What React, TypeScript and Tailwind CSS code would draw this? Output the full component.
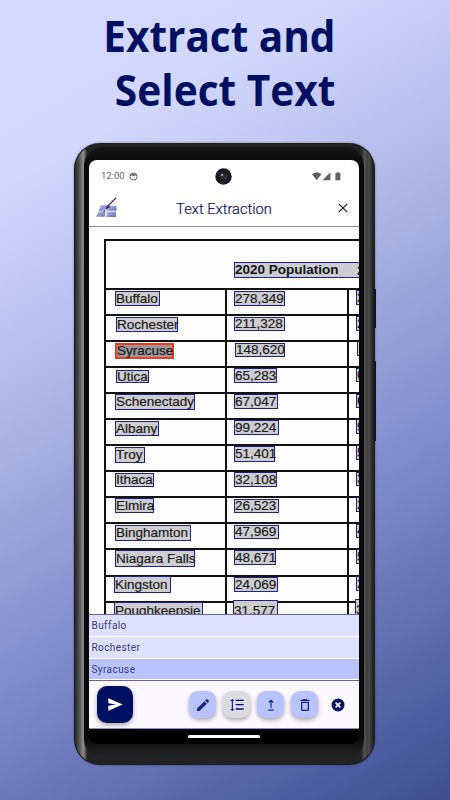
import clsx from "clsx";
import type { ReactNode } from "react";

type Box = { text: string; x: number; y: number; w: number; h: number };
type Row = { height: number; name: Box; value: Box; next: Box; selected?: boolean };

// box offsets are relative to the cell they sit in
const rows: Row[] = [
  { height: 26, name: { text: "Buffalo", x: 9, y: 1, w: 45, h: 15 }, value: { text: "278,349", x: 7, y: 1, w: 51, h: 15 }, next: { text: "2", x: 7, y: 0, w: 50, h: 15 } },
  { height: 26, name: { text: "Rochester", x: 10, y: 1, w: 62, h: 15 }, value: { text: "211,328", x: 7, y: 1, w: 51, h: 14 }, next: { text: "2", x: 7, y: 0, w: 50, h: 15 } },
  { height: 26, selected: true, name: { text: "Syracuse", x: 9, y: 1, w: 59, h: 16 }, value: { text: "148,620", x: 8, y: 1, w: 50, h: 14 }, next: { text: "1", x: 8, y: -1, w: 50, h: 15 } },
  { height: 26, name: { text: "Utica", x: 10, y: 2, w: 33, h: 13 }, value: { text: "65,283", x: 7, y: 0, w: 43, h: 15 }, next: { text: "6", x: 7, y: 0, w: 50, h: 14 } },
  { height: 26, name: { text: "Schenectady", x: 9, y: 0, w: 80, h: 16 }, value: { text: "67,047", x: 7, y: 0, w: 44, h: 15 }, next: { text: "6", x: 7, y: 0, w: 50, h: 14 } },
  { height: 26, name: { text: "Albany", x: 9, y: 1, w: 44, h: 15 }, value: { text: "99,224", x: 7, y: 0, w: 45, h: 15 }, next: { text: "9", x: 7, y: -1, w: 50, h: 15 } },
  { height: 26, name: { text: "Troy", x: 9, y: 1, w: 30, h: 16 }, value: { text: "51,401", x: 7, y: 0, w: 41, h: 16 }, next: { text: "5", x: 7, y: -1, w: 50, h: 15 } },
  { height: 26, name: { text: "Ithaca", x: 9, y: 1, w: 39, h: 14 }, value: { text: "32,108", x: 7, y: 0, w: 43, h: 15 }, next: { text: "3", x: 7, y: 0, w: 50, h: 14 } },
  { height: 26, name: { text: "Elmira", x: 9, y: 0, w: 39, h: 15 }, value: { text: "26,523", x: 7, y: 1, w: 45, h: 14 }, next: { text: "2", x: 7, y: -1, w: 50, h: 15 } },
  { height: 26, name: { text: "Binghamton", x: 9, y: 1, w: 76, h: 16 }, value: { text: "47,969", x: 7, y: 1, w: 45, h: 14 }, next: { text: "4", x: 7, y: 0, w: 50, h: 14 } },
  { height: 27, name: { text: "Niagara Falls", x: 9, y: 0, w: 80, h: 17 }, value: { text: "48,671", x: 7, y: 0, w: 42, h: 15 }, next: { text: "5", x: 7, y: -1, w: 50, h: 15 } },
  { height: 26, name: { text: "Kingston", x: 8, y: -1, w: 57, h: 17 }, value: { text: "24,069", x: 7, y: 0, w: 44, h: 15 }, next: { text: "2", x: 7, y: -1, w: 50, h: 15 } },
  { height: 26, name: { text: "Poughkeepsie", x: 8, y: -1, w: 89, h: 17 }, value: { text: "31,577", x: 6, y: -3, w: 45, h: 21 }, next: { text: "3", x: 6, y: -4, w: 50, h: 21 } },
];

const extracted = ["Buffalo", "Rochester", "Syracuse"];

const TextBox = ({ box, selected, bold }: { box: Box; selected?: boolean; bold?: boolean }) => (
  <div
    className={clsx(
      "flex shrink-0 items-center whitespace-nowrap border text-[13.5px] leading-none",
      selected ? "border-2 border-[#f5391d] bg-[#989898]" : "border-[#1c2484] bg-[#cdcdd0]",
      bold ? "font-bold text-[#151515]" : "text-[#1c1c1c] [-webkit-text-stroke:0.2px_#1c1c1c]",
    )}
    style={{ marginLeft: box.x, marginTop: box.y, width: box.w, height: box.h }}
  >
    {box.text}
  </div>
);

const ToolButton = ({ muted, children }: { muted?: boolean; children: ReactNode }) => (
  <button
    type="button"
    className={clsx(
      "flex h-[27px] w-[27px] items-center justify-center rounded-[9px] text-[#1c2a78] shadow-[0_2px_4px_rgba(0,0,0,0.33)]",
      muted ? "bg-[#dcdbe2]" : "bg-[#b9c3ff]",
    )}
  >
    {children}
  </button>
);

const StatusBar = () => (
  <div className="relative flex h-[32px] items-center justify-between pl-[12px] pr-[17px] text-[#666]">
    <div className="flex items-center gap-[4px]">
      <span className="text-[9.5px] leading-none">12:00</span>
      <svg width="9" height="9" viewBox="0 0 9 9" fill="none" stroke="currentColor">
        <circle cx="4.5" cy="4.5" r="3.6" strokeWidth="1" />
        <path d="M1.2 3.4 3 2h3l1.8 1.4L6 3.2l-1.5.7L3 3.2Z" fill="currentColor" strokeWidth=".4" />
        <path d="M3.2 5h.4M5.4 5h.4" strokeWidth=".8" />
      </svg>
    </div>
    <svg className="absolute left-[126px] top-[8px]" width="17" height="17" viewBox="0 0 17 17">
      <circle cx="8.5" cy="8.5" r="8.2" fill="#171819" />
      <circle cx="8.5" cy="8.5" r="4.5" fill="#22262d" />
      <circle cx="7" cy="7" r="1.3" fill="#8c93ab" />
      <circle cx="10.6" cy="9.8" r="1" fill="#31547d" />
    </svg>
    <svg width="30" height="9" viewBox="0 0 30 9" fill="#606060">
      <path d="M0 2.2C2.6-.1 6.8-.1 9.4 2.2L4.7 8.2Z" />
      <path d="M18.4.3v7.9h-7.9Z" />
      <path d="M23.4 1h1.4V.2h2.2V1h1.4v7.2h-5Z" />
    </svg>
  </div>
);

const Logo = () => (
  <svg width="22" height="21" viewBox="0 0 22 21">
    <defs>
      <linearGradient id="tile" x1="0" y1="0" x2="1" y2="1">
        <stop offset="0" stopColor="#b6beec" />
        <stop offset="1" stopColor="#6370b4" />
      </linearGradient>
    </defs>
    <path d="M4.8 8.3h7.2L10.3 14H2.6Z" fill="url(#tile)" />
    <path d="M12.6 8.8h7.9v5H11Z" fill="url(#tile)" />
    <path d="M2.3 14.5h7.2L8.8 19.8H0Z" fill="url(#tile)" />
    <path d="M11 14.4h9v5.6H10Z" fill="url(#tile)" />
    <path d="m20 .9-9.5 9.5" stroke="#15194c" strokeWidth="1.3" />
    <path d="m12.2 7.8 2.2 2.1-3.2 2.6L8.6 15l-1.7-.8 2.7-2.7Z" fill="#323a78" />
    <path d="m9 11.5-2 2 3.2-1.1-1 1.8 3.5-2.8" fill="none" stroke="#eef0ff" strokeWidth=".7" />
  </svg>
);

const Scan = () => (
  <div className="h-[387px] overflow-hidden bg-[#fdfdfd] pl-[15px] pt-[12px] font-['Liberation_Sans',Arial,sans-serif]">
    <div className="w-[300px] border-l-2 border-t-2 border-[#111]">
      <div className="flex h-[49px] border-b-2 border-[#111]">
        <div className="pl-[128px] pt-[21px]">
          <TextBox bold box={{ text: "2020 Population", x: 0, y: 0, w: 150, h: 16 }} />
        </div>
        <span className="-ml-[27px] mt-[23px] text-[13.5px] font-bold leading-none text-[#151515]">2</span>
      </div>
      {rows.map((row) => (
        <div
          key={row.name.text}
          className="grid grid-cols-[119px_122px_1fr] border-b-2 border-[#111]"
          style={{ height: row.height }}
        >
          <div className="flex h-0 items-start">
            <TextBox box={row.name} selected={row.selected} />
          </div>
          <div className="flex h-full items-start border-l-2 border-[#111]">
            <TextBox box={row.value} />
          </div>
          <div className="flex h-full items-start border-l-2 border-[#111]">
            <TextBox box={row.next} />
          </div>
        </div>
      ))}
    </div>
  </div>
);

const Toolbar = () => (
  <div className="flex h-[48px] items-center border-b border-[#8e93bd] bg-[#fbf8ff] pl-[8px]">
    <button
      type="button"
      className="flex h-[37px] w-[36px] items-center justify-center rounded-[10px] bg-[#001060] shadow-[0_2px_4px_rgba(0,0,0,0.35)]"
    >
      <svg width="15" height="13" viewBox="0 0 15 13" fill="white">
        <path d="M.3.3 14.7 6.5.3 12.7V7.8L8 6.5.3 5.2Z" />
      </svg>
    </button>
    <div className="ml-[56px] flex gap-[7px]">
      <ToolButton>
        <svg width="16" height="16" viewBox="0 0 24 24" fill="currentColor">
          <path d="M3 17.25V21h3.75L17.81 9.94l-3.75-3.75L3 17.25zM20.71 7.04a1 1 0 0 0 0-1.41l-2.34-2.34a1 1 0 0 0-1.41 0l-1.83 1.83 3.75 3.75 1.83-1.83z" />
        </svg>
      </ToolButton>
      <ToolButton muted>
        <svg width="16" height="16" viewBox="0 0 24 24" fill="#001080">
          <path d="M5.8 6H8L5 3 2 6h2.2v12H2l3 3 3-3H5.8V6zM10 4v2h12V4H10zm0 15h12v-2H10v2zm0-6.5h12v-2H10v2z" />
        </svg>
      </ToolButton>
      <ToolButton>
        <svg width="16" height="16" viewBox="0 0 16 16" fill="none" stroke="currentColor" strokeWidth="1.2">
          <path d="M8 11V3.4M5.8 5.5 8 3.3l2.2 2.2M5.3 13.2h5.4" />
        </svg>
      </ToolButton>
      <ToolButton>
        <svg width="16" height="16" viewBox="0 0 24 24" fill="currentColor">
          <path d="M6 19c0 1.1.9 2 2 2h8c1.1 0 2-.9 2-2V7H6v12zM8 9h8v10H8V9zm7.5-5-1-1h-5l-1 1H5v2h14V4h-3.5z" />
        </svg>
      </ToolButton>
    </div>
    <svg className="ml-[13px]" width="14" height="14" viewBox="0 0 14 14">
      <circle cx="7" cy="7" r="6.5" fill="#001060" />
      <path d="m4.6 4.6 4.8 4.8M9.4 4.6 4.6 9.4" stroke="white" strokeWidth="1.6" />
    </svg>
  </div>
);

const Phone = () => (
  <div className="relative h-[622px] w-[301px] rounded-[26px] bg-[#202020] p-px shadow-[0_0_2px_rgba(0,0,0,0.5)]">
    <div className="absolute -right-px top-[146px] h-[39px] w-[2px] bg-[#151515]" />
    <div className="absolute -right-px top-[218px] h-[80px] w-[2px] bg-[#151515]" />
    <div className="h-full rounded-[25px] bg-[linear-gradient(90deg,#252525_0,#3a3a3a_2px,#5a5a5a_5px,#8c8c8c_8px,#666_10px,#222_12px,#222_286px,#555_290px,#3b3b3b_292px,#4b4b4b_294px,#222_298px)] pb-[6px] pl-[9px] pr-[10px] pt-[3px]">
      <div className="h-full rounded-[19px] bg-[linear-gradient(#141414,#090909_20px,#0a0a0a_590px,#252525)] pb-[14px] pl-[5px] pr-[5px] pt-[13px]">
        <div className="h-full overflow-hidden rounded-[8px] bg-black font-[Roboto,sans-serif]">
          <div className="bg-white">
            <StatusBar />
            <div className="flex h-[35px] items-center justify-between border-b border-[#8289b5] pb-[3px] pl-[7px] pr-[11px]">
              <Logo />
              <h2 className="mr-[8px] pt-[3px] text-[14.7px] font-light leading-none text-[#0d1458] [-webkit-text-stroke:0.2px_#0d1458]">
                Text Extraction
              </h2>
              <svg width="10" height="10" viewBox="0 0 10 10" stroke="#15194c" strokeWidth="1.2">
                <path d="m.8.8 8.4 8.4M9.2.8.8 9.2" />
              </svg>
            </div>
          </div>
          <Scan />
          <ul className="h-[67px] overflow-hidden border-y border-[#6268a0] text-[10px] tracking-[0.42px] text-[#353e7b]">
            {extracted.map((text) => (
              <li
                key={text}
                className={clsx(
                  "flex items-center border-b border-white pl-[2.5px]",
                  text === "Syracuse" ? "h-[21px] bg-[#b9c3ff]" : "h-[22px] bg-[#dee0ff]",
                )}
              >
                {text}
              </li>
            ))}
          </ul>
          <Toolbar />
          <div className="mx-auto mt-[6px] h-[3px] w-[72px] rounded-full bg-white" />
        </div>
      </div>
    </div>
  </div>
);

export default function App() {
  return (
    <main className="h-[800px] w-[450px] overflow-hidden bg-[linear-gradient(150deg,#d4d9ff_0%,#d2d7fd_18%,#b0b8e6_39%,#808ccb_65%,#6c78b9_76%,#4e5da1_91%,#3f4d90_100%)]">
      <h1 className="flex h-[143px] flex-col items-end pr-[115px] pt-[9px] font-['Open_Sans','Noto_Sans',sans-serif] text-[43px] font-bold leading-[54px] text-[#001060]">
        <span className="origin-right scale-x-[0.942] whitespace-nowrap">Extract and</span>
        <span className="origin-right scale-x-[0.945] whitespace-nowrap">Select Text</span>
      </h1>
      <div className="pl-[74px]">
        <Phone />
      </div>
    </main>
  );
}
